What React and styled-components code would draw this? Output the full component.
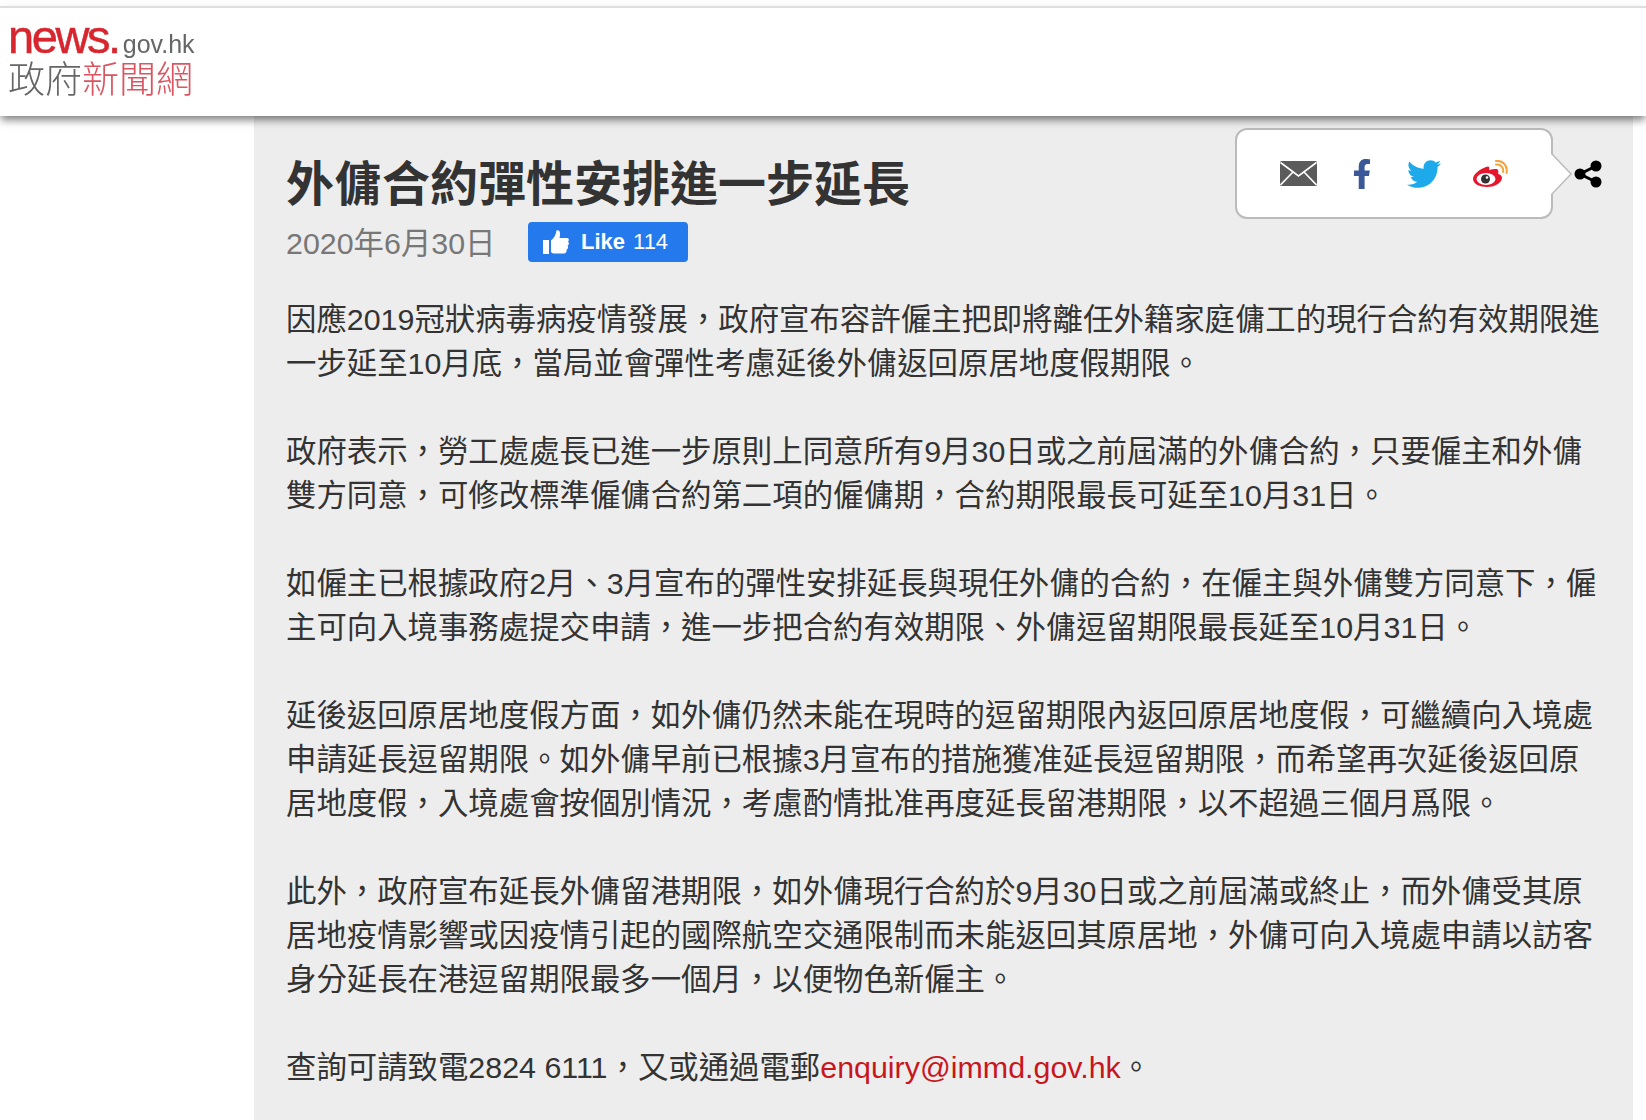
import React from "react";
import styled, { createGlobalStyle } from "styled-components";
import { FaFacebookF, FaTwitter } from "react-icons/fa";

const CJK = `"Liberation Sans", "Noto Sans CJK TC", sans-serif`;

const GlobalStyle = createGlobalStyle`
  html, body {
    margin: 0;
    background: #fff;
    overflow: hidden;
  }
  body {
    font-family: ${CJK};
    color: #333;
  }
`;

const Page = styled.div`
  width: 1646px;
  height: 1120px;
  display: flex;
  flex-direction: column;
`;

const Header = styled.header`
  position: relative;
  z-index: 2;
  flex: none;
  height: 108px;
  margin-top: 6px;
  padding: 0 0 0 8px;
  background: #fff;
  border-top: 2px solid #dedde2;
  box-shadow: 0 5px 8px -1px rgba(0, 0, 0, 0.5);
`;

const Logo = styled.a`
  display: block;
  width: 190px;
  padding-top: 7px;
  filter: blur(0.5px);
`;

const LogoTop = styled.div`
  display: flex;
  align-items: baseline;
  height: 43px;
  line-height: 43px;
`;

const LogoNews = styled.span`
  font-size: 47px;
  letter-spacing: -2.4px;
  color: #d8262f;
  -webkit-text-stroke: 0.5px #d8262f;
`;

const LogoGov = styled.span`
  margin-left: 4px;
  font-size: 25px;
  color: #666;
`;

const LogoBottom = styled.div`
  font-size: 37px;
  font-weight: 300;
  line-height: 46px;
  white-space: nowrap;
  color: #666;
`;

const LogoRed = styled.span`
  color: #da5560;
`;

const Main = styled.div`
  flex: 1;
  display: flex;
  padding: 0 13px 0 254px;
  min-height: 0;
`;

const Panel = styled.main`
  flex: 1;
  padding: 12px 31px 0 32px;
  background: #ededed;
`;

const TopRow = styled.div`
  display: flex;
  justify-content: space-between;
  align-items: flex-start;
`;

const Title = styled.h1`
  margin: 27px 0 7px;
  font-size: 48px;
  font-weight: 700;
  line-height: 60px;
  color: #333;
`;

const MetaRow = styled.div`
  display: flex;
  align-items: center;
  height: 40px;
`;

const DateText = styled.span`
  width: 242px;
  margin-top: -2px;
  font-size: 30.4px;
  color: #777;
`;

const LikeButton = styled.button`
  display: flex;
  align-items: center;
  width: 160px;
  height: 40px;
  padding: 0 0 0 15px;
  border: 0;
  border-radius: 4px;
  background: #2479ec;
  color: #fff;
  font-family: ${CJK};
  font-size: 22px;
`;

const LikeLabel = styled.b`
  margin-left: 12px;
`;

const LikeCount = styled.span`
  margin-left: 8px;
`;

const ShareWrap = styled.div`
  display: flex;
  align-items: center;
  gap: 2px;
`;

const ShareBox = styled.div`
  position: relative;
  box-sizing: border-box;
  display: flex;
  align-items: center;
  width: 318px;
  height: 91px;
  padding-left: 43px;
  gap: 36px;
  background: #fff;
  border: 2px solid #bbb;
  border-radius: 12px;
`;

const BoxArrow = styled.svg`
  position: absolute;
  left: 314px;
  top: 20px;
`;

const ShareIcon = styled.svg`
  margin-left: 19px;
  display: block;
`;

const IconSlot = styled.span`
  display: flex;
  margin: ${(p) => p.$margin || "0"};
  color: ${(p) => p.$color};
`;

const Article = styled.article`
  margin-top: 35px;
  font-size: 30.4px;
  line-height: 44px;
  color: #333;
`;

const Paragraph = styled.p`
  margin: 0 0 44px;
`;

const Line = styled.span`
  display: block;
  white-space: nowrap;
`;

const MailLink = styled.a`
  color: #c8161d;
`;

const MailIcon = () => (
  <svg width="37" height="25" viewBox="0 0 37 25">
    <rect width="37" height="25" rx="1.5" fill="#5b5b5b" />
    <path d="M0.5 1.5 L18.5 15 L36.5 1.5 M0.5 24 L13 11 M36.5 24 L24 11" stroke="#fff" strokeWidth="1.6" fill="none" />
  </svg>
);

const WeiboIcon = () => (
  <svg width="36" height="27" viewBox="0 0 36 27">
    <path d="M14 7 C6 10 1 15 1 19 C1 24 8 27 15 27 C24 27 30 22 30 18 C30 15 27 14 26 14 C27 11 26 9 24 9 C21 8.500 18 10 17 10 C18 7 17 5.500 14 7 Z" fill="#e6162d" />
    <ellipse cx="14" cy="19" rx="9.500" ry="6" fill="#fff" />
    <circle cx="13.500" cy="19" r="4.500" fill="#333" />
    <circle cx="15" cy="17.500" r="1.300" fill="#fff" />
    <path d="M24 4.500 C29 4 32 8 31 12 M24 1 C31 0 36 6 34.500 13" stroke="#f5a33c" strokeWidth="2" fill="none" strokeLinecap="round" />
  </svg>
);

const ThumbIcon = () => (
  <svg width="26" height="26" viewBox="0 0 26 26">
    <rect x="0" y="11" width="6" height="14" fill="#fff" />
    <path d="M8 11.500 C11 9 13 6 13.500 1.500 C16.500 0 18 3.500 16.500 9 L24 9 C26 9 26.500 11.500 25 12.500 C26.500 14 26 16 24.500 16.500 C25.500 18 25 20 23.500 20.500 C24 22.500 23 24.500 21 24.500 L12 24.500 C10 24.500 9 24 8 23 Z" fill="#fff" />
  </svg>
);

const paragraphs = [
  [
    "因應2019冠狀病毒病疫情發展，政府宣布容許僱主把即將離任外籍家庭傭工的現行合約有效期限進",
    "一步延至10月底，當局並會彈性考慮延後外傭返回原居地度假期限。",
  ],
  [
    "政府表示，勞工處處長已進一步原則上同意所有9月30日或之前屆滿的外傭合約，只要僱主和外傭",
    "雙方同意，可修改標準僱傭合約第二項的僱傭期，合約期限最長可延至10月31日。",
  ],
  [
    "如僱主已根據政府2月、3月宣布的彈性安排延長與現任外傭的合約，在僱主與外傭雙方同意下，僱",
    "主可向入境事務處提交申請，進一步把合約有效期限、外傭逗留期限最長延至10月31日。",
  ],
  [
    "延後返回原居地度假方面，如外傭仍然未能在現時的逗留期限內返回原居地度假，可繼續向入境處",
    "申請延長逗留期限。如外傭早前已根據3月宣布的措施獲准延長逗留期限，而希望再次延後返回原",
    "居地度假，入境處會按個別情況，考慮酌情批准再度延長留港期限，以不超過三個月爲限。",
  ],
  [
    "此外，政府宣布延長外傭留港期限，如外傭現行合約於9月30日或之前屆滿或終止，而外傭受其原",
    "居地疫情影響或因疫情引起的國際航空交通限制而未能返回其原居地，外傭可向入境處申請以訪客",
    "身分延長在港逗留期限最多一個月，以便物色新僱主。",
  ],
];

export default function App() {
  return (
    <Page>
      <GlobalStyle />
      <Header>
        <Logo>
          <LogoTop>
            <LogoNews>news.</LogoNews>
            <LogoGov>gov.hk</LogoGov>
          </LogoTop>
          <LogoBottom>
            政府<LogoRed>新聞網</LogoRed>
          </LogoBottom>
        </Logo>
      </Header>
      <Main>
        <Panel>
          <TopRow>
            <div>
              <Title>外傭合約彈性安排進一步延長</Title>
              <MetaRow>
                <DateText>2020年6月30日</DateText>
                <LikeButton>
                  <ThumbIcon />
                  <LikeLabel>Like</LikeLabel>
                  <LikeCount>114</LikeCount>
                </LikeButton>
              </MetaRow>
            </div>
            <ShareWrap>
              <ShareBox>
                <MailIcon />
                <IconSlot $color="#3b5998" $margin="0 -6px">
                  <FaFacebookF size={30} />
                </IconSlot>
                <IconSlot $color="#1da9ea" $margin="0 -5px 0 0">
                  <FaTwitter size={34} />
                </IconSlot>
                <WeiboIcon />
                <BoxArrow width="22" height="48" viewBox="0 0 22 48">
                  <path d="M0 3 L20 24 L0 45 Z" fill="#fff" />
                  <path d="M0 3 L20 24 L0 45" fill="none" stroke="#bbb" strokeWidth="1.500" />
                </BoxArrow>
              </ShareBox>
              <ShareIcon width="28" height="28" viewBox="0 0 28 28">
                <path d="M22 6 L6 14 L22 22" stroke="#000" strokeWidth="3" fill="none" />
                <circle cx="22" cy="6" r="5.500" />
                <circle cx="6" cy="14" r="5.500" />
                <circle cx="22" cy="22" r="5.500" />
              </ShareIcon>
            </ShareWrap>
          </TopRow>
          <Article>
            {paragraphs.map((lines) => (
              <Paragraph key={lines[0]}>
                {lines.map((line) => (
                  <Line key={line}>{line}</Line>
                ))}
              </Paragraph>
            ))}
            <Paragraph>
              <Line>
                查詢可請致電2824 6111，又或通過電郵
                <MailLink>enquiry@immd.gov.hk</MailLink>。
              </Line>
            </Paragraph>
          </Article>
        </Panel>
      </Main>
    </Page>
  );
}
